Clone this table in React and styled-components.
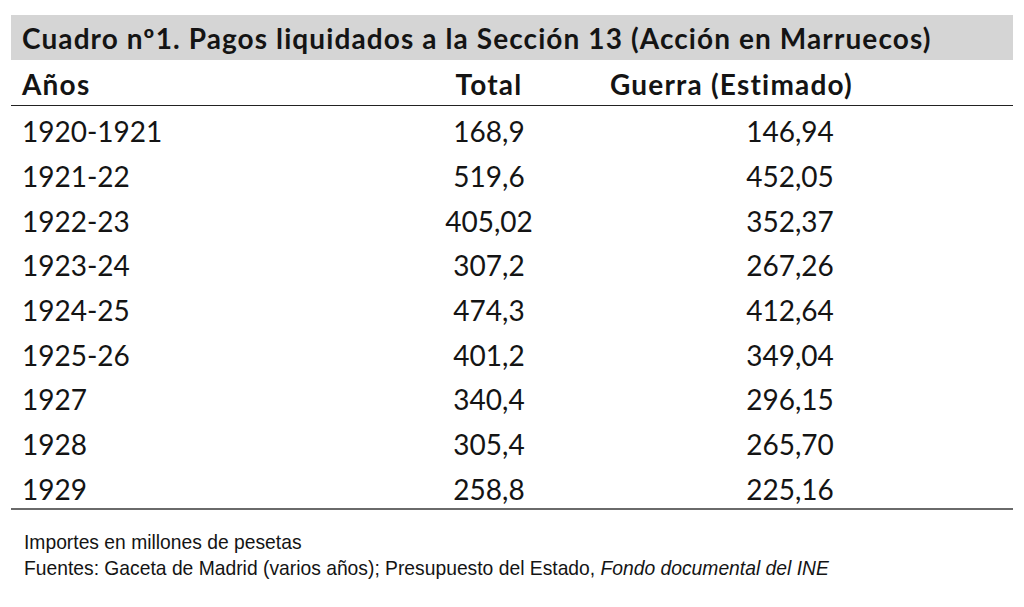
import React from "react";
import styled, { createGlobalStyle } from "styled-components";

const GlobalStyle = createGlobalStyle`
    html, body {
        margin: 0;
        padding: 0;
        background: #ffffff;
    }
    body {
        font-family: "Lato", "Liberation Sans", sans-serif;
        color: #141414;
    }
`;

const rows = [
    { years: `1920-1921`, total: `168,9`, war: `146,94` },
    { years: `1921-22`, total: `519,6`, war: `452,05` },
    { years: `1922-23`, total: `405,02`, war: `352,37` },
    { years: `1923-24`, total: `307,2`, war: `267,26` },
    { years: `1924-25`, total: `474,3`, war: `412,64` },
    { years: `1925-26`, total: `401,2`, war: `349,04` },
    { years: `1927`, total: `340,4`, war: `296,15` },
    { years: `1928`, total: `305,4`, war: `265,70` },
    { years: `1929`, total: `258,8`, war: `225,16` },
];

const App = () => (
    <>
        <GlobalStyle />
        <Page>
            <Title>Cuadro nº1. Pagos liquidados a la Sección 13 (Acción en Marruecos)</Title>
            <Table>
                <HeadRow>
                    <HeadCell>Años</HeadCell>
                    <HeadCell align={`center`}>Total</HeadCell>
                    <HeadCell indent={12}>Guerra (Estimado)</HeadCell>
                    <HeadCell />
                </HeadRow>
                {rows.map((row) => (
                    <Row key={row.years}>
                        <Cell>{row.years}</Cell>
                        <Cell align={`center`}>{row.total}</Cell>
                        <Cell align={`center`}>{row.war}</Cell>
                        <Cell />
                    </Row>
                ))}
            </Table>
            <Notes>
                <Note>Importes en millones de pesetas</Note>
                <Note>
                    Fuentes: Gaceta de Madrid (varios años); Presupuesto del Estado, <em>Fondo documental del INE</em>
                </Note>
            </Notes>
        </Page>
    </>
);

const Page = styled.div`
    width: 1024px;
    height: 607px;
    padding: 15px 11px 0 11px;
    box-sizing: border-box;
    display: flex;
    flex-direction: column;
    overflow: hidden;
`;

const Title = styled.div`
    height: 45px;
    background: #d5d5d5;
    padding: 0 11px;
    display: flex;
    align-items: center;
    font-weight: 700;
    font-size: 28px;
    letter-spacing: 1.1px;
    white-space: nowrap;
`;

const Table = styled.div`
    display: flex;
    flex-direction: column;
    border-bottom: 2px solid #6a6a6a;
`;

const columns = `369px 218px 384px 31px`;

const HeadRow = styled.div`
    display: grid;
    grid-template-columns: ${columns};
    height: 46px;
    padding-top: 3px;
    border-bottom: 1.5px solid #222;
    box-sizing: border-box;
`;

const Row = styled.div`
    display: grid;
    grid-template-columns: ${columns};
    height: 44.7px;
`;

const HeadCell = styled.div`
    display: flex;
    align-items: center;
    justify-content: ${({ align }) => (align === `center` ? `center` : `flex-start`)};
    padding-left: ${({ align, indent = 11 }) => (align === `center` ? 0 : indent)}px;
    font-weight: 700;
    font-size: 28px;
    letter-spacing: 1.2px;
    white-space: nowrap;
`;

const Cell = styled.div`
    display: flex;
    align-items: center;
    justify-content: ${({ align }) => (align === `center` ? `center` : `flex-start`)};
    padding-left: ${({ align }) => (align === `center` ? 0 : 11)}px;
    padding-top: 6px;
    font-size: 28px;
    white-space: nowrap;
`;

const Notes = styled.div`
    display: flex;
    flex-direction: column;
    padding: 19px 0 0 13px;
`;

const Note = styled.div`
    font-family: "Liberation Sans", "Arial", sans-serif;
    font-size: 21px;
    line-height: 26px;
    color: #141414;
    white-space: nowrap;
    transform: scaleX(0.918);
    transform-origin: left center;

    em {
        font-style: italic;
    }
`;

export default App;
